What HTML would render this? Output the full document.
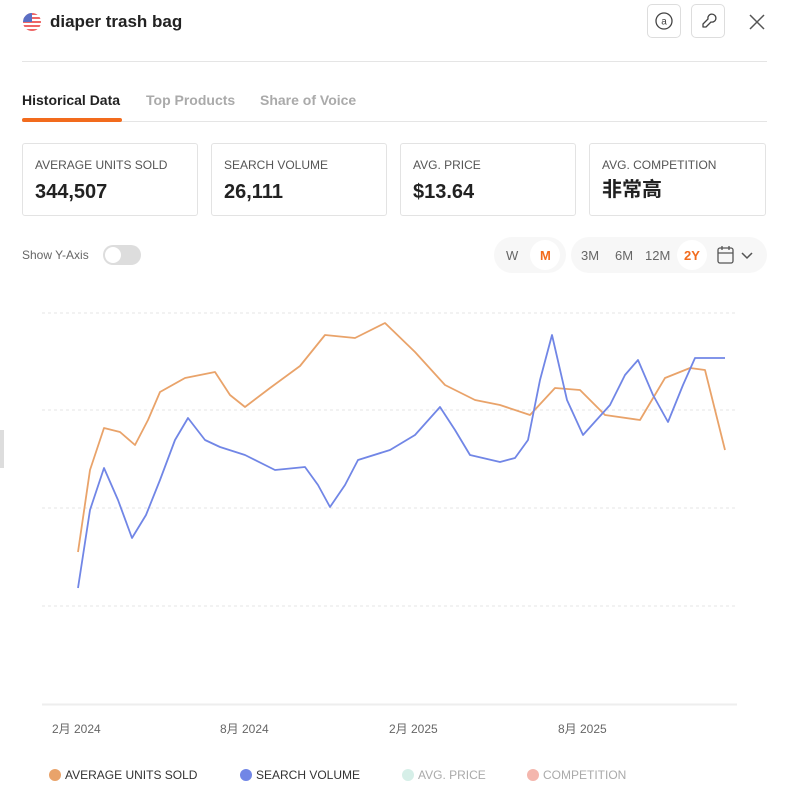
<!DOCTYPE html>
<html><head><meta charset="utf-8"><style>
body{margin:0;width:796px;height:811px;background:#fff;font-family:"Liberation Sans","Noto Sans CJK SC",sans-serif;position:relative;overflow:hidden;color:#222}
.a{position:absolute}
.card{position:absolute;top:143px;width:176px;height:73px;border:1px solid #e3e3e3;border-radius:3px;box-sizing:border-box}
.card .l{position:absolute;left:12px;top:14px;font-size:12px;color:#555}
.card .v{position:absolute;left:12px;top:36px;font-size:20px;line-height:24px;font-weight:bold;color:#222}
.btn{position:absolute;top:4px;width:34px;height:34px;border:1px solid #ddd;border-radius:5px;box-sizing:border-box}
.lg{position:absolute;top:768px;font-size:12px}
.dot{display:inline-block;width:12px;height:12px;border-radius:50%;vertical-align:-2px;margin-right:4px}
.xl{position:absolute;top:720px;font-size:12px;color:#666}
</style></head><body>
<svg class="a" style="left:22px;top:12px" width="20" height="20" viewBox="0 0 20 20"><clipPath id="c"><circle cx="10" cy="10" r="9"/></clipPath><g clip-path="url(#c)"><rect width="20" height="20" fill="#fff"/><rect y="1" width="20" height="2" fill="#e66"/><rect y="5" width="20" height="2" fill="#e66"/><rect y="9" width="20" height="2" fill="#e66"/><rect y="13" width="20" height="2" fill="#e66"/><rect y="17" width="20" height="2" fill="#e66"/><rect width="10" height="10" fill="#5b6fc4"/></g></svg>
<div class="a" style="left:50px;top:12px;font-size:17px;font-weight:bold">diaper trash bag</div>
<div class="btn" style="left:647px"><svg width="32" height="32"><circle cx="16" cy="16" r="8" fill="none" stroke="#444" stroke-width="1.3"/><text x="16" y="19.5" font-size="10" text-anchor="middle" fill="#444" font-family="Liberation Sans">a</text></svg></div>
<div class="btn" style="left:691px"><svg width="32" height="32"><path d="M11 22 L11 19 L16 14 A4 4 0 1 1 19 17 L14 22 Z" fill="none" stroke="#444" stroke-width="1.3" stroke-linejoin="round"/></svg></div>
<svg class="a" style="left:748px;top:13px" width="18" height="18"><path d="M2 2L16 16M16 2L2 16" stroke="#555" stroke-width="1.5"/></svg>
<div class="a" style="left:22px;top:61px;width:745px;height:1px;background:#e5e5e5"></div>
<div class="a" style="left:22px;top:92px;font-size:14px;font-weight:bold;color:#222">Historical Data</div>
<div class="a" style="left:146px;top:92px;font-size:14px;font-weight:bold;color:#aaa">Top Products</div>
<div class="a" style="left:260px;top:92px;font-size:14px;font-weight:bold;color:#aaa">Share of Voice</div>
<div class="a" style="left:22px;top:121px;width:745px;height:1px;background:#e5e5e5"></div>
<div class="a" style="left:22px;top:118px;width:100px;height:4px;background:#f26b1d;border-radius:2px"></div>
<div class="card" style="left:22px"><div class="l">AVERAGE UNITS SOLD</div><div class="v">344,507</div></div>
<div class="card" style="left:211px"><div class="l">SEARCH VOLUME</div><div class="v">26,111</div></div>
<div class="card" style="left:400px"><div class="l">AVG. PRICE</div><div class="v">$13.64</div></div>
<div class="card" style="left:589px;width:177px"><div class="l">AVG. COMPETITION</div><div class="v" style="top:35px;line-height:22px">非常高</div></div>
<div class="a" style="left:22px;top:248px;font-size:12px;color:#666">Show Y-Axis</div>
<div class="a" style="left:103px;top:245px;width:38px;height:20px;border-radius:10px;background:#ddd"><div style="position:absolute;left:2px;top:2px;width:16px;height:16px;border-radius:50%;background:#fff"></div></div>
<div class="a" style="left:494px;top:237px;width:72px;height:36px;border-radius:18px;background:#f7f7f7"></div>
<div class="a" style="left:571px;top:237px;width:196px;height:36px;border-radius:18px;background:#f7f7f7"></div>
<div class="a" style="left:530px;top:240px;width:30px;height:30px;border-radius:15px;background:#fff"></div>
<div class="a" style="left:677px;top:240px;width:30px;height:30px;border-radius:15px;background:#fff"></div>
<div class="a" style="top:248px;left:506px;font-size:13px;color:#666">W</div>
<div class="a" style="top:248px;left:540px;font-size:13px;color:#f26b1d;font-weight:bold">M</div>
<div class="a" style="top:248px;left:581px;font-size:13px;color:#666">3M</div>
<div class="a" style="top:248px;left:615px;font-size:13px;color:#666">6M</div>
<div class="a" style="top:248px;left:645px;font-size:13px;color:#666">12M</div>
<div class="a" style="top:248px;left:684px;font-size:13px;color:#f26b1d;font-weight:bold">2Y</div>
<svg class="a" style="left:716px;top:244px" width="40" height="22"><rect x="2" y="4" width="15" height="15" rx="2" fill="none" stroke="#555" stroke-width="1.3"/><path d="M2 9H17M6 2V6M13 2V6" stroke="#555" stroke-width="1.3"/><path d="M26 9L31 14L36 9" fill="none" stroke="#555" stroke-width="1.5"/></svg>
<div class="a" style="left:0;top:430px;width:4px;height:38px;background:#ddd"></div>
<svg class="a" style="left:0;top:0" width="796" height="811">
<g stroke="#e6e6e6" stroke-dasharray="3 3"><path d="M42 313H737M42 410H737M42 508H737M42 606H737"/></g>
<path d="M42 704.5H737" stroke="#eee" stroke-width="2"/>
<polyline fill="none" stroke="#e9a36a" stroke-width="1.8" stroke-linejoin="round" points="78,552 90,470 104,428 120,432 135,445 148,420 160,392 185,378 215,372 230,395 245,407 270,388 300,366 325,335 355,338 385,323 415,352 445,385 475,400 500,405 530,415 555,388 580,390 605,415 640,420 665,378 690,368 705,370 725,450"/>
<polyline fill="none" stroke="#7186e6" stroke-width="1.8" stroke-linejoin="round" points="78,588 90,510 104,468 118,500 132,538 146,515 160,480 175,440 188,418 205,440 220,447 245,455 275,470 305,467 318,485 330,507 345,485 358,460 390,450 415,435 440,407 455,430 470,455 500,462 515,458 528,440 540,380 552,335 567,400 583,435 610,405 625,375 638,360 653,395 668,422 683,385 695,358 725,358"/>
</svg>
<div class="xl" style="left:52px">2月 2024</div>
<div class="xl" style="left:220px">8月 2024</div>
<div class="xl" style="left:389px">2月 2025</div>
<div class="xl" style="left:558px">8月 2025</div>
<div class="lg" style="left:49px;color:#333"><span class="dot" style="background:#e9a36a"></span>AVERAGE UNITS SOLD</div>
<div class="lg" style="left:240px;color:#333"><span class="dot" style="background:#7186e6"></span>SEARCH VOLUME</div>
<div class="lg" style="left:402px;color:#aaa"><span class="dot" style="background:#d6efe8"></span>AVG. PRICE</div>
<div class="lg" style="left:527px;color:#aaa"><span class="dot" style="background:#f4b6ad"></span>COMPETITION</div>
</body></html>
